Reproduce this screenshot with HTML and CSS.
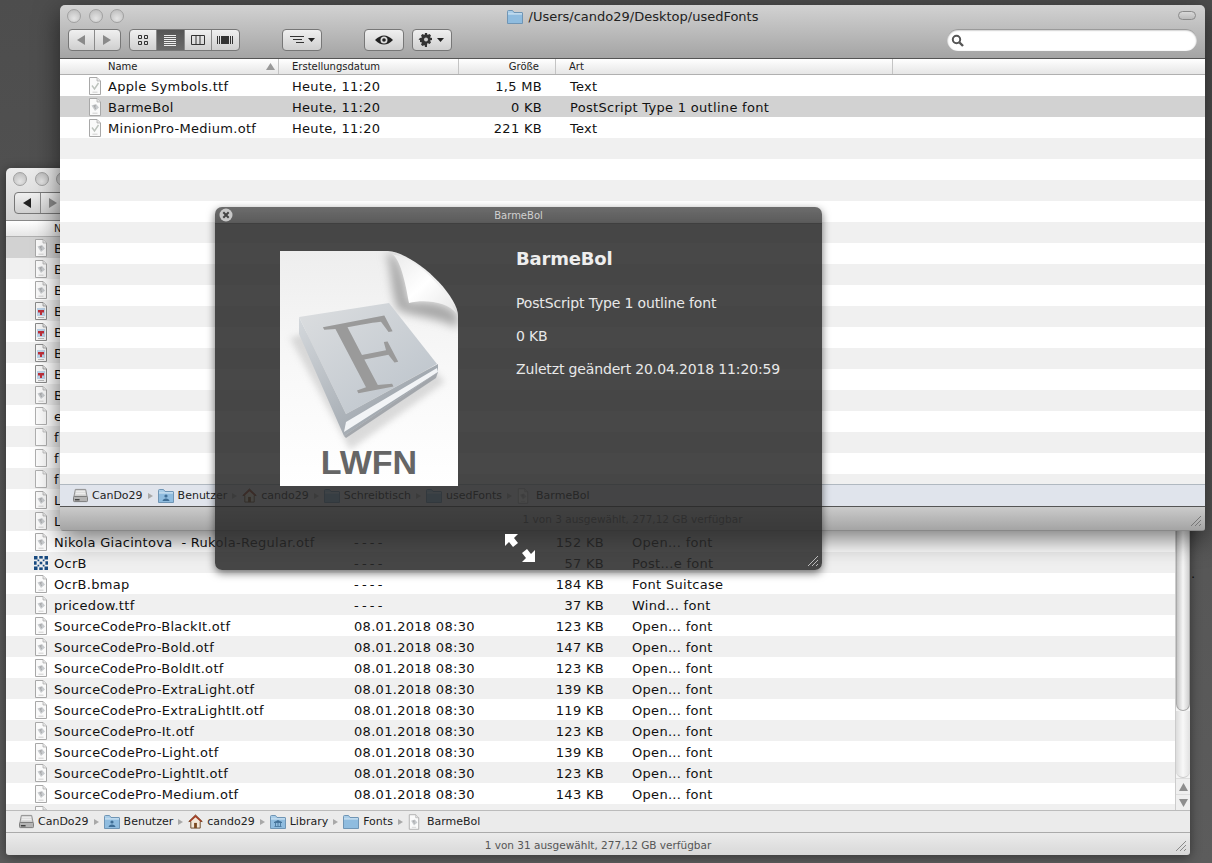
FILE: index.html
```html
<!DOCTYPE html>
<html lang="de">
<head>
<meta charset="utf-8">
<title>BarmeBol</title>
<link rel="stylesheet" href="styles.css">
</head>
<body>
<svg class="defs" width="0" height="0" aria-hidden="true">
  <defs>
    <symbol id="doc" viewBox="0 0 14 18">
      <path d="M1.500.5H9L12.500 4V17.500H1.500Z" fill="#fbfbfb" stroke="#b0b0b0"/>
      <path d="M9 .5V4H12.500" fill="#eee" stroke="#b0b0b0" stroke-width=".7"/>
    </symbol>
    <symbol id="font" viewBox="0 0 14 18">
      <path d="M1.500.5H9L12.500 4V17.500H1.500Z" fill="#fafafa" stroke="#a8a8a8"/>
      <path d="M9 .5V4H12.500" fill="#e6e6e6" stroke="#a8a8a8" stroke-width=".7"/>
      <path d="M3.500 7.500L8 6 11 9.500 7 13Z" fill="#c8cbce"/>
      <path d="M5.500 7.800H8M6.400 7.800L7.500 11" stroke="#9a9a9a" stroke-width=".7" fill="none"/>
      <path d="M4.500 15.200H9.500" stroke="#cfcfcf" stroke-width="1"/>
    </symbol>
    <symbol id="fontok" viewBox="0 0 14 18">
      <path d="M1.500.5H9L12.500 4V17.500H1.500Z" fill="#fafafa" stroke="#a8a8a8"/>
      <path d="M9 .5V4H12.500" fill="#e6e6e6" stroke="#a8a8a8" stroke-width=".7"/>
      <path d="M4 8.500L6.500 12 10.500 6" stroke="#bcc2bc" stroke-width="1.400" fill="none"/>
      <path d="M4.500 15.200H9.500" stroke="#cfcfcf" stroke-width="1"/>
    </symbol>
    <symbol id="red" viewBox="0 0 14 18">
      <path d="M1.500.5H9L12.500 4V17.500H1.500Z" fill="#f6f6f6" stroke="#8a8a8a"/>
      <path d="M9 .5V4H12.500" fill="#e6e6e6" stroke="#8a8a8a" stroke-width=".7"/>
      <rect x="3" y="6" width="8" height="8" fill="#bcd2e8"/>
      <path d="M4 8H10V10.500H8V13H6V10.500H4Z" fill="#c0303a"/>
      <path d="M4 15.500H10" stroke="#bbb" stroke-width="1"/>
    </symbol>
    <symbol id="pattern" viewBox="0 0 16 16">
      <g fill="#174a80">
        <rect x="0" y="0" width="4" height="4"/><rect x="6" y="0" width="4" height="3"/><rect x="12" y="0" width="4" height="4"/>
        <rect x="4" y="4" width="2" height="2"/><rect x="10" y="4" width="2" height="2"/>
        <rect x="0" y="6" width="3" height="4"/><rect x="6.500" y="6.500" width="3" height="3"/><rect x="13" y="6" width="3" height="4"/>
        <rect x="4" y="10" width="2" height="2"/><rect x="10" y="10" width="2" height="2"/>
        <rect x="0" y="12" width="4" height="4"/><rect x="6" y="13" width="4" height="3"/><rect x="12" y="12" width="4" height="4"/>
      </g>
    </symbol>
    <symbol id="drive" viewBox="0 0 16 16">
      <path d="M2.500 1.500H13.500L15 9H1Z" fill="#d8d8d8" stroke="#8c8c8c"/>
      <rect x=".5" y="9" width="15" height="5.500" rx="1" fill="#b4b4b4" stroke="#777"/>
      <path d="M3 4H13M3 6H13" stroke="#f2f2f2"/>
      <path d="M2 12.500H7" stroke="#444" stroke-width="1.500"/>
    </symbol>
    <symbol id="folder" viewBox="0 0 16 14">
      <path d="M.5 3V1.500Q.5.500 1.500.500H5.500L7 2.500H15Q15.500 2.500 15.500 3V13.500H.5Z" fill="#a9cde8" stroke="#6f95b5"/>
      <path d="M1 4H15V13H1Z" fill="#8fbcdf"/>
      <path d="M1 4H15" stroke="#d4e6f4"/>
    </symbol>
    <symbol id="userfolder" viewBox="0 0 16 14">
      <use href="#folder" width="16" height="14"/>
      <circle cx="8" cy="7" r="1.600" fill="#3f6e96"/>
      <path d="M4.500 12Q5 9.500 8 9.500T11.500 12Z" fill="#3f6e96"/>
    </symbol>
    <symbol id="libfolder" viewBox="0 0 16 14">
      <use href="#folder" width="16" height="14"/>
      <path d="M4 7.500L8 5.500 12 7.500ZM4.500 11.500H11.500M5.500 8V11M8 8V11M10.500 8V11" stroke="#3f6e96" stroke-width=".8" fill="#3f6e96"/>
    </symbol>
    <symbol id="home" viewBox="0 0 16 16">
      <path d="M8 1L.8 8H3V15H13V8H15.200Z" fill="#f2e8d8" stroke="#6b4a2a"/>
      <path d="M8 1L.8 8H3L8 3.500 13 8H15.200Z" fill="#a33a22"/>
      <rect x="6.500" y="9.500" width="3" height="5.500" fill="#7a4a20"/>
    </symbol>
    <linearGradient id="paper" x1="0" y1="0" x2="0" y2="1">
      <stop offset="0" stop-color="#eeeeee"/><stop offset=".5" stop-color="#f8f8f8"/><stop offset="1" stop-color="#fff"/>
    </linearGradient>
    <linearGradient id="flap" x1="0" y1="0" x2="1" y2="1">
      <stop offset="0" stop-color="#eaeaea"/><stop offset=".5" stop-color="#fff"/><stop offset="1" stop-color="#e6e6e6"/>
    </linearGradient>
    <linearGradient id="cover" x1="0" y1="0" x2="1" y2="1">
      <stop offset="0" stop-color="#dcdee0"/><stop offset="1" stop-color="#bac2ca"/>
    </linearGradient>
    <linearGradient id="spine" x1="0" y1="0" x2="1" y2="1">
      <stop offset="0" stop-color="#d4d8dc"/><stop offset="1" stop-color="#8e969e"/>
    </linearGradient>
    <clipPath id="paperclip"><path d="M0 1H108C135 3 178 45 178 66V236H0Z"/></clipPath>
    <filter id="blur" x="-30%" y="-30%" width="160%" height="160%"><feGaussianBlur stdDeviation="5"/></filter>
    <filter id="blur2" x="-30%" y="-30%" width="160%" height="160%"><feGaussianBlur stdDeviation="3"/></filter>
  </defs>
</svg>

<main class="desk">
  <span class="desk-note">.</span>

  <section class="win win-back">
    <header class="toolbar toolbar-light">
      <div class="lights"><i class="light"></i><i class="light"></i><i class="light"></i></div>
      <div class="tools">
        <div class="seg nav"><span class="btn"><svg width="10" height="10" viewBox="0 0 10 10"><path d="M9 0V10L1 5Z" fill="#222"/></svg></span><span class="btn"><svg width="10" height="10" viewBox="0 0 10 10"><path d="M1 0V10L9 5Z" fill="#8a8a8a"/></svg></span></div>
      </div>
    </header>
    <div class="cols cols-back head"><span class="hc hc-name">Name</span><span class="hc"></span><span class="hc"></span><span class="hc"></span></div>
    <div class="list-wrap">
      <div class="rows">
        <div class="cols cols-back row sel"><span class="name"><svg class="ic"><use href="#font"/></svg>Barme.otf</span></div>
        <div class="cols cols-back row"><span class="name"><svg class="ic"><use href="#font"/></svg>Barme2.otf</span></div>
        <div class="cols cols-back row"><span class="name"><svg class="ic"><use href="#font"/></svg>Barme3.otf</span></div>
        <div class="cols cols-back row"><span class="name"><svg class="ic"><use href="#red"/></svg>Barme4</span></div>
        <div class="cols cols-back row"><span class="name"><svg class="ic"><use href="#red"/></svg>Barme5</span></div>
        <div class="cols cols-back row"><span class="name"><svg class="ic"><use href="#red"/></svg>Barme6</span></div>
        <div class="cols cols-back row"><span class="name"><svg class="ic"><use href="#red"/></svg>Barme7</span></div>
        <div class="cols cols-back row"><span class="name"><svg class="ic"><use href="#font"/></svg>Barme8</span></div>
        <div class="cols cols-back row"><span class="name"><svg class="ic"><use href="#doc"/></svg>e</span></div>
        <div class="cols cols-back row"><span class="name"><svg class="ic"><use href="#doc"/></svg>f</span></div>
        <div class="cols cols-back row"><span class="name"><svg class="ic"><use href="#doc"/></svg>f</span></div>
        <div class="cols cols-back row"><span class="name"><svg class="ic"><use href="#doc"/></svg>f</span></div>
        <div class="cols cols-back row"><span class="name"><svg class="ic"><use href="#font"/></svg>L</span></div>
        <div class="cols cols-back row"><span class="name"><svg class="ic"><use href="#font"/></svg>L</span></div>
        <div class="cols cols-back row"><span class="name"><svg class="ic"><use href="#font"/></svg>Nikola Giacintova&nbsp; - Rukola-Regular.otf</span><span class="date dash">----</span><span class="size">152 KB</span><span class="kind">Open... font</span></div>
        <div class="cols cols-back row"><span class="name"><svg class="ic"><use href="#pattern"/></svg>OcrB</span><span class="date dash">----</span><span class="size">57 KB</span><span class="kind">Post...e font</span></div>
        <div class="cols cols-back row"><span class="name"><svg class="ic"><use href="#font"/></svg>OcrB.bmap</span><span class="date dash">----</span><span class="size">184 KB</span><span class="kind">Font Suitcase</span></div>
        <div class="cols cols-back row"><span class="name"><svg class="ic"><use href="#font"/></svg>pricedow.ttf</span><span class="date dash">----</span><span class="size">37 KB</span><span class="kind">Wind... font</span></div>
        <div class="cols cols-back row"><span class="name"><svg class="ic"><use href="#font"/></svg>SourceCodePro-BlackIt.otf</span><span class="date">08.01.2018 08:30</span><span class="size">123 KB</span><span class="kind">Open... font</span></div>
        <div class="cols cols-back row"><span class="name"><svg class="ic"><use href="#font"/></svg>SourceCodePro-Bold.otf</span><span class="date">08.01.2018 08:30</span><span class="size">147 KB</span><span class="kind">Open... font</span></div>
        <div class="cols cols-back row"><span class="name"><svg class="ic"><use href="#font"/></svg>SourceCodePro-BoldIt.otf</span><span class="date">08.01.2018 08:30</span><span class="size">123 KB</span><span class="kind">Open... font</span></div>
        <div class="cols cols-back row"><span class="name"><svg class="ic"><use href="#font"/></svg>SourceCodePro-ExtraLight.otf</span><span class="date">08.01.2018 08:30</span><span class="size">139 KB</span><span class="kind">Open... font</span></div>
        <div class="cols cols-back row"><span class="name"><svg class="ic"><use href="#font"/></svg>SourceCodePro-ExtraLightIt.otf</span><span class="date">08.01.2018 08:30</span><span class="size">119 KB</span><span class="kind">Open... font</span></div>
        <div class="cols cols-back row"><span class="name"><svg class="ic"><use href="#font"/></svg>SourceCodePro-It.otf</span><span class="date">08.01.2018 08:30</span><span class="size">123 KB</span><span class="kind">Open... font</span></div>
        <div class="cols cols-back row"><span class="name"><svg class="ic"><use href="#font"/></svg>SourceCodePro-Light.otf</span><span class="date">08.01.2018 08:30</span><span class="size">139 KB</span><span class="kind">Open... font</span></div>
        <div class="cols cols-back row"><span class="name"><svg class="ic"><use href="#font"/></svg>SourceCodePro-LightIt.otf</span><span class="date">08.01.2018 08:30</span><span class="size">123 KB</span><span class="kind">Open... font</span></div>
        <div class="cols cols-back row"><span class="name"><svg class="ic"><use href="#font"/></svg>SourceCodePro-Medium.otf</span><span class="date">08.01.2018 08:30</span><span class="size">143 KB</span><span class="kind">Open... font</span></div>
        <div class="cols cols-back row"><span class="name"><svg class="ic"><use href="#font"/></svg>SourceCodePro-MediumIt.otf</span><span class="date">08.01.2018 08:30</span><span class="size">123 KB</span><span class="kind">Open... font</span></div>
      </div>
      <div class="scroll">
        <div class="thumb"></div>
        <div class="track"></div>
        <div class="arrow"><svg width="9" height="8" viewBox="0 0 9 8"><path d="M4.500 0L9 8H0Z" fill="#8e8e8e"/></svg></div>
        <div class="arrow"><svg width="9" height="8" viewBox="0 0 9 8"><path d="M4.500 8L9 0H0Z" fill="#8e8e8e"/></svg></div>
      </div>
    </div>
    <nav class="path path-back">
      <span class="crumb"><svg class="pi"><use href="#drive"/></svg>CanDo29</span><i class="sep"></i>
      <span class="crumb"><svg class="pf"><use href="#userfolder"/></svg>Benutzer</span><i class="sep"></i>
      <span class="crumb"><svg class="pi"><use href="#home"/></svg>cando29</span><i class="sep"></i>
      <span class="crumb"><svg class="pf"><use href="#libfolder"/></svg>Library</span><i class="sep"></i>
      <span class="crumb"><svg class="pf"><use href="#folder"/></svg>Fonts</span><i class="sep"></i>
      <span class="crumb"><svg class="pd"><use href="#font"/></svg>BarmeBol</span>
    </nav>
    <footer class="status status-back">1 von 31 ausgewählt, 277,12 GB verfügbar<svg class="grip" width="12" height="12" viewBox="0 0 12 12"><path d="M1 11L11 1M5 11L11 5M9 11L11 9" stroke="#8a8a8a"/></svg></footer>
  </section>

  <section class="win win-front">
    <header class="toolbar toolbar-dark">
      <div class="title"><svg class="title-ic"><use href="#folder"/></svg>/Users/cando29/Desktop/usedFonts</div>
      <i class="pill"></i>
      <div class="lights"><i class="light"></i><i class="light"></i><i class="light"></i></div>
      <div class="tools">
        <div class="seg nav"><span class="btn"><svg width="10" height="10" viewBox="0 0 10 10"><path d="M9 0V10L1 5Z" fill="#8a8a8a"/></svg></span><span class="btn"><svg width="10" height="10" viewBox="0 0 10 10"><path d="M1 0V10L9 5Z" fill="#8a8a8a"/></svg></span></div>
        <div class="seg views">
          <span class="btn"><svg width="12" height="10" viewBox="0 0 12 10"><path d="M1.500.5H4.500V3.500H1.500ZM7.500.5H10.500V3.500H7.500ZM1.500 6.500H4.500V9.500H1.500ZM7.500 6.500H10.500V9.500H7.500Z" fill="none" stroke="#333"/></svg></span>
          <span class="btn on"><svg width="14" height="12" viewBox="0 0 14 12"><path d="M1 1.500H13M1 3.500H13M1 5.500H13M1 7.500H13M1 9.500H13M1 11.500H13" stroke="#eee"/></svg></span>
          <span class="btn"><svg width="14" height="10" viewBox="0 0 14 10"><path d="M.5.5H13.500V9.500H.5ZM5 .5V9.500M9 .5V9.500" fill="none" stroke="#333"/></svg></span>
          <span class="btn"><svg width="16" height="10" viewBox="0 0 16 10"><path d="M.5 1V9M2.500 1V9" stroke="#333"/><rect x="4" y="1" width="8" height="8" fill="#333"/><path d="M13.500 1V9M15.500 1V9" stroke="#333"/></svg></span>
        </div>
        <span class="tool sort"><svg width="26" height="10" viewBox="0 0 26 10"><path d="M1 1.500H15M4 4.500H13M7 7.500H15" stroke="#333"/><path d="M19 3H26L22.500 7Z" fill="#222"/></svg></span>
        <span class="tool eye"><svg width="20" height="12" viewBox="0 0 20 12"><path d="M1 6Q10-3 19 6 10 15 1 6Z" fill="#222"/><circle cx="10" cy="6" r="3.500" fill="#ddd"/><circle cx="10" cy="6" r="1.800" fill="#222"/></svg></span>
        <span class="tool gear"><svg width="28" height="14" viewBox="0 0 28 14"><path d="M7 0H9L9.500 2 11.500 1 13 2.500 12 4.500 14 5V7L12 7.500 13 9.500 11.500 11 9.500 10 9 12 9 14H7L6.500 12 4.500 13 3 11.500 4 9.500 2 9V7L.5 6.500 2 5 4 4.500 3 2.500 4.500 1 6.500 2Z" fill="#333"/><circle cx="8" cy="6.500" r="2" fill="#ccc"/><path d="M19 5H26L22.500 9Z" fill="#222"/></svg></span>
        <div class="search"><svg width="13" height="13" viewBox="0 0 13 13"><circle cx="5.500" cy="5.500" r="3.700" fill="none" stroke="#555" stroke-width="2"/><path d="M8.500 8.500L12 12" stroke="#555" stroke-width="2.400"/></svg></div>
      </div>
    </header>
    <div class="cols cols-front head"><span class="hc hc-name">Name<svg class="sort-arrow" width="9" height="7" viewBox="0 0 9 7"><path d="M4.500 0L9 7H0Z" fill="#999"/></svg></span><span class="hc">Erstellungsdatum</span><span class="hc hc-size">Größe</span><span class="hc">Art</span><span class="hc hc-last"></span></div>
    <div class="list-wrap">
      <div class="rows">
        <div class="cols cols-front row"><span class="name"><svg class="ic"><use href="#fontok"/></svg>Apple Symbols.ttf</span><span class="date">Heute, 11:20</span><span class="size">1,5 MB</span><span class="kind">Text</span></div>
        <div class="cols cols-front row sel"><span class="name"><svg class="ic"><use href="#font"/></svg>BarmeBol</span><span class="date">Heute, 11:20</span><span class="size">0 KB</span><span class="kind">PostScript Type 1 outline font</span></div>
        <div class="cols cols-front row"><span class="name"><svg class="ic"><use href="#fontok"/></svg>MinionPro-Medium.otf</span><span class="date">Heute, 11:20</span><span class="size">221 KB</span><span class="kind">Text</span></div>
        <div class="row"></div><div class="row"></div><div class="row"></div><div class="row"></div><div class="row"></div><div class="row"></div><div class="row"></div><div class="row"></div><div class="row"></div><div class="row"></div><div class="row"></div><div class="row"></div><div class="row"></div><div class="row"></div><div class="row"></div><div class="row"></div><div class="row"></div>
      </div>
    </div>
    <nav class="path path-front">
      <span class="crumb"><svg class="pi"><use href="#drive"/></svg>CanDo29</span><i class="sep"></i>
      <span class="crumb"><svg class="pf"><use href="#userfolder"/></svg>Benutzer</span><i class="sep"></i>
      <span class="crumb"><svg class="pi"><use href="#home"/></svg>cando29</span><i class="sep"></i>
      <span class="crumb"><svg class="pf"><use href="#folder"/></svg>Schreibtisch</span><i class="sep"></i>
      <span class="crumb"><svg class="pf"><use href="#folder"/></svg>usedFonts</span><i class="sep"></i>
      <span class="crumb"><svg class="pd"><use href="#font"/></svg>BarmeBol</span>
    </nav>
    <footer class="status status-front">1 von 3 ausgewählt, 277,12 GB verfügbar<svg class="grip" width="12" height="12" viewBox="0 0 12 12"><path d="M1 11L11 1M5 11L11 5M9 11L11 9" stroke="#777"/></svg></footer>
  </section>

  <section class="ql">
    <header class="ql-title">
      <svg class="ql-close" width="14" height="14" viewBox="0 0 14 14"><circle cx="7" cy="7" r="6.500" fill="#c8c8c8"/><path d="M4.300 4.300L9.700 9.700M9.700 4.300L4.300 9.700" stroke="#444" stroke-width="2"/></svg>
      BarmeBol
    </header>
    <div class="ql-body">
      <svg class="ql-icon" width="179" height="237" viewBox="0 0 179 237">
        <path d="M0 1H108C135 3 178 45 178 66V236H0Z" fill="url(#paper)"/>
        <g clip-path="url(#paperclip)">
          <path d="M112 4C120 9 125 30 129 53 145 50 170 52 178 66V78C160 68 132 66 118 60 110 40 112 15 106 4Z" fill="#a8a8a8" filter="url(#blur)"/>
        </g>
        <path d="M112 4C120 9 125 30 129 53 145 49 168 52 177 64 160 30 135 9 112 4Z" fill="url(#flap)"/>
        <path d="M10 88L70 200 165 132 100 60Z" fill="#b9b9b9" opacity=".5" filter="url(#blur2)"/>
        <path d="M19 67V84L64 186 158 122V114L66 164Z" fill="url(#spine)"/>
        <path d="M66 172L157 118 158 122 64 182Z" fill="#f2f4f6"/>
        <path d="M64 186L158 122 156 128 66 188Z" fill="#8b9299" opacity=".7"/>
        <path d="M19 67L109 53 157 114 66 164Z" fill="url(#cover)"/>
        <text class="ql-f" transform="matrix(1.25 -.238 .53 1.01 74 144)">F</text>
        <text class="ql-kind" x="89" y="224" text-anchor="middle">LWFN</text>
      </svg>
      <div class="ql-info">
        <h1 class="ql-name">BarmeBol</h1>
        <p class="ql-line">PostScript Type 1 outline font</p>
        <p class="ql-line">0 KB</p>
        <p class="ql-line">Zuletzt geändert 20.04.2018 11:20:59</p>
      </div>
    </div>
    <svg class="ql-expand" width="32" height="30" viewBox="0 0 32 30"><path d="M1 1H14L10 5 14 10 9 14 5 9 1 13ZM31 29H18L22 25 18 20 23 16 27 21 31 17Z" fill="#fff"/></svg>
    <svg class="ql-grip" width="12" height="12" viewBox="0 0 12 12"><path d="M1 11L11 1M5 11L11 5M9 11L11 9" stroke="#bbb"/></svg>
  </section>
</main>
</body>
</html>
```

FILE: styles.css
```css
* { box-sizing: border-box; }
html, body { margin: 0; padding: 0; }
body { width: 1212px; height: 863px; overflow: hidden; background: #5a5a5a; font-family: "DejaVu Sans", "Liberation Sans", sans-serif; color: #111; }
.defs { position: absolute; }
.desk { position: relative; width: 1212px; height: 863px; background: linear-gradient(#4d4d4d, #5c5c5c); }
.desk-note { position: absolute; left: 1191px; top: 566px; font-size: 13px; color: #111; }

.win { position: absolute; display: flex; flex-direction: column; border-radius: 5px 5px 3px 3px; overflow: hidden; }
.win-back { left: 6px; top: 168px; width: 1184px; height: 687px; box-shadow: 0 2px 12px rgba(0, 0, 0, .45); }
.win-front { left: 60px; top: 5px; width: 1145px; height: 526px; box-shadow: 0 8px 26px rgba(0, 0, 0, .55); }

.toolbar { position: relative; flex: none; height: 54px; border-bottom: 1px solid #555; }
.toolbar-light { height: 53px; background: linear-gradient(#ececec, #d2d2d2); border-bottom-color: #888; }
.toolbar-dark { background: linear-gradient(#d2d2d2, #a4a4a4); }
.lights { display: flex; gap: 7.5px; padding: 4px 0 0 7px; height: 24px; }
.light { width: 14px; height: 14px; border-radius: 50%; background: radial-gradient(circle at 50% 70%, #e4e4e4, #b8b8b8); border: 1px solid #a0a0a0; }
.tools { display: flex; align-items: center; padding-left: 8px; }
.seg { display: flex; height: 22px; border: 1px solid #777; border-radius: 4px; overflow: hidden; background: linear-gradient(#f0f0f0, #cfcfcf); }
.btn { display: flex; align-items: center; justify-content: center; width: 26px; border-right: 1px solid #8a8a8a; }
.btn:last-child { border-right: 0; }
.nav { width: 53px; }
.views { width: 111px; margin-left: 8px; }
.views .btn { width: 28px; }
.btn.on { background: linear-gradient(#555, #6a6a6a); }
.tool { display: flex; align-items: center; justify-content: center; width: 40px; height: 22px; border: 1px solid #777; border-radius: 4px; background: linear-gradient(#f0f0f0, #cfcfcf); }
.sort { margin-left: 42px; }
.eye { margin-left: 42px; }
.gear { margin-left: 8px; }
.search { display: flex; align-items: center; width: 250px; height: 22px; margin-left: 495px; padding-left: 4px; background: #fff; border-radius: 11px; box-shadow: inset 0 1px 2px #777; }
.title { position: absolute; left: 0; right: 0; top: 4px; display: flex; justify-content: center; align-items: center; gap: 6px; font-size: 13px; color: #222; }
.title-ic { width: 16px; height: 14px; }
.pill { position: absolute; right: 9px; top: 6px; width: 18px; height: 9px; border: 1px solid #8a8a8a; border-radius: 5px; background: linear-gradient(#d8d8d8, #bbb); }

.cols { display: grid; align-items: center; }
.cols-front { grid-template-columns: 219px 180px 97px 337px 1fr; }
.cols-back { grid-template-columns: 334px 160px 118px 1fr; }
.head { flex: none; height: 16px; font-size: 10px; background: linear-gradient(#fff, #e6e6e6); border-bottom: 1px solid #b0b0b0; color: #222; }
.hc { display: flex; align-items: center; height: 15px; padding-left: 13px; border-right: 1px solid #c4c4c4; }
.hc-name { position: relative; padding-left: 48px; }
.hc-size { justify-content: flex-end; padding: 0 16px 0 0; }
.hc-last { border-right: 0; }
.sort-arrow { position: absolute; right: 3px; top: 4px; }

.list-wrap { flex: 1; display: flex; min-height: 0; background: #fff; }
.rows { flex: 1; overflow: hidden; min-width: 0; }
.row { height: 21px; font-size: 13px; letter-spacing: .3px; background: #fff; white-space: nowrap; }
.row:nth-child(even) { background: #f0f0f0; }
.rows .row.sel { background: #d2d2d2; }
.name { display: flex; align-items: center; gap: 6px; padding-left: 28px; overflow: hidden; line-height: 21px; padding-top: 1px; }
.ic { flex: none; width: 14px; height: 18px; margin-top: -1px; }
.date, .size, .kind { padding-top: 1px; }
.date { padding-left: 14px; }
.cols-front .date { padding-left: 13px; }
.dash { letter-spacing: 3.2px; }
.size { text-align: right; padding-right: 14px; }
.kind { padding-left: 14px; }

.scroll { flex: none; width: 15px; display: flex; flex-direction: column; background: #f4f4f4; border-left: 1px solid #ccc; }
.thumb { flex: none; height: 474px; border: 1px solid #aaa; border-top: 0; border-radius: 0 0 8px 8px; background: linear-gradient(90deg, #c4c4c4, #f6f6f6 50%, #d0d0d0); }
.track { flex: 1; border-radius: 0 0 8px 8px; background: linear-gradient(90deg, #dcdcdc, #f8f8f8 50%, #e0e0e0); border-bottom: 1px solid #ccc; }
.arrow { flex: none; height: 16px; display: flex; align-items: center; justify-content: center; background: #efefef; border-top: 1px solid #ddd; }

.path { flex: none; height: 23px; display: flex; align-items: center; gap: 3px; padding-left: 13px; font-size: 11px; color: #222; white-space: nowrap; border-top: 1px solid #b0b8c0; border-bottom: 1px solid #555; }
.path-back { background: #ebebeb; border-top-color: #bbb; border-bottom-color: #aaa; }
.path-front { background: #e0e4ec; }
.crumb { display: flex; align-items: center; gap: 4px; }
.pi { width: 15px; height: 15px; }
.pf { width: 16px; height: 14px; }
.pd { width: 12px; height: 16px; margin-right: 3px; }
.sep { width: 0; height: 0; margin: 0 2px; border-left: 5px solid #a8a8a8; border-top: 3px solid transparent; border-bottom: 3px solid transparent; }

.status { position: relative; flex: none; display: flex; align-items: center; justify-content: center; padding-top: 1px; font-size: 10.500px; color: #555; }
.status-back { height: 22px; background: linear-gradient(#ebebeb, #d8d8d8); }
.status-front { height: 24px; background: linear-gradient(#cbcbcb, #a4a4a4); border-bottom: 1px solid #888; }
.grip { position: absolute; right: 3px; bottom: 3px; }

.ql { position: absolute; left: 215px; top: 207px; width: 607px; height: 363px; display: flex; flex-direction: column; border-radius: 7px; overflow: hidden; background: rgba(40, 40, 40, .85); box-shadow: 0 3px 9px rgba(0, 0, 0, .55); color: #e8e8e8; }
.ql-title { position: relative; flex: none; height: 17px; display: flex; align-items: center; justify-content: center; font-size: 10px; color: #d0d0d0; background: linear-gradient(rgba(255, 255, 255, .2), rgba(255, 255, 255, .1)); border-bottom: 1px solid rgba(0, 0, 0, .4); }
.ql-close { position: absolute; left: 4px; top: 1px; }
.ql-body { display: flex; padding: 26px 0 0 65px; }
.ql-icon { flex: none; }
.ql-f { font-family: "Liberation Serif", serif; font-size: 100px; fill: #9a9a9a; }
.ql-kind { font-family: "Liberation Sans", sans-serif; font-weight: 700; font-size: 34px; fill: #666; }
.ql-info { margin: 0 0 0 57px; }
.ql-name { margin: -3px 0 22px; font-size: 18px; font-weight: 700; line-height: 24px; letter-spacing: -.2px; color: #eee; }
.ql-line { margin: 12px 0 0; font-size: 14px; line-height: 21px; letter-spacing: -.15px; }
.ql-name + .ql-line { margin-top: 22px; }
.ql-expand { position: absolute; left: 289px; top: 326px; }
.ql-grip { position: absolute; right: 3px; bottom: 3px; }
```
